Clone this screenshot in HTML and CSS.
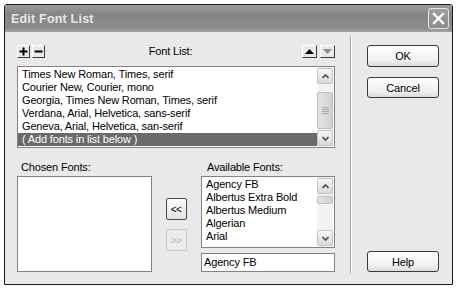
FILE: index.html
```html
<!DOCTYPE html>
<html lang="en">
<head>
    <meta charset="UTF-8">
    <meta name="viewport" content="width=device-width, initial-scale=1.0">
    <title>Edit Font List</title>
    <link rel="stylesheet" href="styles.css">
</head>
<body>
    <div class="window">
        <div class="titlebar">
            <span class="title">Edit Font List</span>
            <span class="close-btn">
                <svg width="13" height="13" viewBox="0 0 13 13"><path d="M2 2 L11 11 M11 2 L2 11" stroke="#fff" stroke-width="2.4" stroke-linecap="square"/></svg>
            </span>
        </div>
        <div class="content">
            <div class="main">
                <div class="toolbar">
                    <span class="tool-btn">
                        <svg width="9" height="9" viewBox="0 0 9 9"><path d="M4.5 0.5 V8.5 M0.5 4.5 H8.5" stroke="#000" stroke-width="2"/></svg>
                    </span>
                    <span class="tool-btn">
                        <svg width="9" height="9" viewBox="0 0 9 9"><path d="M0.5 4.5 H8.5" stroke="#000" stroke-width="2"/></svg>
                    </span>
                    <span class="toolbar-label">Font List:</span>
                    <span class="tool-btn arrow">
                        <svg width="9" height="5" viewBox="0 0 9 5"><path d="M0 5 L4.5 0 L9 5 Z" fill="#000"/></svg>
                    </span>
                    <span class="tool-btn arrow">
                        <svg width="9" height="5" viewBox="0 0 9 5"><path d="M0 0 L4.5 5 L9 0 Z" fill="#8c8c8c"/></svg>
                    </span>
                </div>
                <div class="listbox font-list">
                    <div class="rows">
                        <div class="row">Times New Roman, Times, serif</div>
                        <div class="row">Courier New, Courier, mono</div>
                        <div class="row">Georgia, Times New Roman, Times, serif</div>
                        <div class="row">Verdana, Arial, Helvetica, sans-serif</div>
                        <div class="row">Geneva, Arial, Helvetica, san-serif</div>
                        <div class="row selected">( Add fonts in list below )</div>
                    </div>
                    <div class="scrollbar">
                        <span class="sb-btn"><svg width="7" height="5" viewBox="0 0 7 5"><path d="M0.5 4 L3.5 1 L6.5 4" fill="none" stroke="#4a4a4a" stroke-width="1.6"/></svg></span>
                        <span class="sb-thumb big"><svg width="7" height="7" viewBox="0 0 7 7"><path d="M0 0.5 H7 M0 2.5 H7 M0 4.5 H7 M0 6.5 H7" stroke="#a8a8a8" stroke-width="1"/></svg></span>
                        <span class="sb-btn down"><svg width="7" height="5" viewBox="0 0 7 5"><path d="M0.5 1 L3.5 4 L6.5 1" fill="none" stroke="#4a4a4a" stroke-width="1.6"/></svg></span>
                    </div>
                </div>
                <div class="lower">
                    <div class="label chosen-label">Chosen Fonts:</div>
                    <div class="label avail-label">Available Fonts:</div>
                    <div class="chosen-box"></div>
                    <div class="move-btns">
                        <span class="move-btn">&lt;&lt;</span>
                        <span class="move-btn disabled">&gt;&gt;</span>
                    </div>
                    <div class="avail">
                        <div class="listbox avail-list">
                            <div class="rows">
                                <div class="row">Agency FB</div>
                                <div class="row">Albertus Extra Bold</div>
                                <div class="row">Albertus Medium</div>
                                <div class="row">Algerian</div>
                                <div class="row">Arial</div>
                            </div>
                            <div class="scrollbar">
                                <span class="sb-btn"><svg width="7" height="5" viewBox="0 0 7 5"><path d="M0.5 4 L3.5 1 L6.5 4" fill="none" stroke="#4a4a4a" stroke-width="1.6"/></svg></span>
                                <span class="sb-thumb small"></span>
                                <span class="sb-btn down"><svg width="7" height="5" viewBox="0 0 7 5"><path d="M0.5 1 L3.5 4 L6.5 1" fill="none" stroke="#4a4a4a" stroke-width="1.6"/></svg></span>
                            </div>
                        </div>
                        <div class="text-input">Agency FB</div>
                    </div>
                </div>
            </div>
            <div class="separator"></div>
            <div class="buttons">
                <span class="btn ok">OK</span>
                <span class="btn cancel">Cancel</span>
                <span class="btn help">Help</span>
            </div>
        </div>
    </div>
</body>
</html>
```

FILE: styles.css
```css
body {
    margin: 0;
    padding: 4px;
    background: #fff;
    font-family: 'Liberation Sans', Arial, sans-serif;
    font-size: 11px;
    letter-spacing: -0.15px;
    color: #000;
}
.window {
    width: 447px;
    height: 279px;
    border: 1px solid #1a1a1a;
    border-radius: 3px 3px 0 0;
    background: #e9e9e9;
    overflow: hidden;
}
.titlebar {
    height: 27px;
    display: flex;
    align-items: center;
    justify-content: space-between;
    padding: 0 3px 0 6px;
    background: linear-gradient(#9b9b9b, #858585 35%, #8c8c8c 85%, #a4a4a4);
}
.title {
    font-weight: bold;
    font-size: 12.5px;
    color: #e6e6e6;
    letter-spacing: 0.2px;
}
.close-btn {
    width: 19px;
    height: 19px;
    border: 1px solid #e4e4e4;
    border-radius: 3px;
    background: linear-gradient(#a0a0a0, #8a8a8a);
    display: flex;
    align-items: center;
    justify-content: center;
}
.content {
    display: flex;
    height: 252px;
    padding-left: 12px;
}
.main {
    width: 318px;
    padding-top: 12px;
}
.toolbar {
    height: 14px;
    display: flex;
    align-items: center;
}
.tool-btn {
    width: 11px;
    height: 11px;
    border: 1px solid;
    border-color: #fff #3c3c3c #3c3c3c #fff;
    background: #e9e9e9;
    display: flex;
    align-items: center;
    justify-content: center;
    margin-right: 2px;
}
.tool-btn.arrow {
    width: 13px;
    margin-right: 3px;
}
.tool-btn.arrow:last-child {
    margin-right: 0;
}
.toolbar-label {
    flex: 1;
    text-align: center;
    padding-right: 8px;
}
.listbox {
    display: flex;
    background: #fff;
    border: 1px solid #828282;
}
.font-list {
    margin-top: 8px;
    height: 80px;
}
.rows {
    flex: 1;
    padding-top: 1px;
}
.row {
    height: 13px;
    line-height: 13px;
    padding-left: 4px;
    white-space: nowrap;
}
.row.selected {
    background: #6a6a6a;
    color: #fff;
}
.scrollbar {
    width: 16px;
    margin-right: 1px;
    padding-top: 1px;
    display: flex;
    flex-direction: column;
    background: #f2f2f2;
}
.sb-btn {
    width: 14px;
    height: 14px;
    border: 1px solid #c4c4c4;
    border-radius: 2px;
    background: linear-gradient(#f6f6f6, #d9d9d9);
    display: flex;
    align-items: center;
    justify-content: center;
}
.sb-btn.down {
    margin-top: auto;
    margin-bottom: 1px;
}
.sb-thumb {
    width: 14px;
    border: 1px solid #bdbdbd;
    border-radius: 2px;
    background: linear-gradient(90deg, #e4e4e4, #d2d2d2);
    display: flex;
    align-items: center;
    justify-content: center;
}
.sb-thumb.big {
    height: 35px;
    margin-top: 8px;
}
.sb-thumb.small {
    height: 6px;
    margin-top: 2px;
}
.lower {
    margin-top: 13px;
    display: grid;
    grid-template-columns: 135px 49px 134px;
    grid-template-rows: 15px auto;
}
.label {
    line-height: 13px;
}
.chosen-label {
    grid-column: 1;
    padding-left: 4px;
}
.avail-label {
    grid-column: 3;
    padding-left: 6px;
}
.chosen-box {
    height: 94px;
    background: #fff;
    border: 1px solid #828282;
}
.move-btns {
    display: flex;
    flex-direction: column;
    align-items: center;
    padding-top: 22px;
    padding-right: 1px;
}
.move-btn {
    width: 19px;
    height: 20px;
    border: 1px solid #4a4a4a;
    border-radius: 2px;
    background: linear-gradient(#fcfcfc, #e2e2e2);
    display: flex;
    align-items: center;
    justify-content: center;
    font-size: 10px;
    letter-spacing: -0.5px;
}
.move-btn.disabled {
    margin-top: 9px;
    border-color: #c8c8c8;
    color: #b4b4b4;
    background: #ececec;
}
.avail-list {
    height: 70px;
}
.text-input {
    margin-top: 5px;
    height: 17px;
    line-height: 17px;
    background: #fff;
    border: 1px solid #828282;
    padding-left: 2px;
}
.separator {
    width: 1px;
    margin: 4px 0 11px 15px;
    background: #a2a2a2;
    border-right: 1px solid #fff;
}
.buttons {
    display: flex;
    flex-direction: column;
    margin-left: 15px;
    padding: 13px 0 12px;
}
.btn {
    width: 70px;
    height: 19px;
    border: 1px solid #3a3a3a;
    border-radius: 3px;
    background: linear-gradient(#fefefe, #f0f0f0 70%, #dcdcdc);
    display: flex;
    align-items: center;
    justify-content: center;
}
.btn.ok {
    height: 20px;
}
.btn.cancel {
    margin-top: 10px;
}
.btn.help {
    margin-top: auto;
}
```
